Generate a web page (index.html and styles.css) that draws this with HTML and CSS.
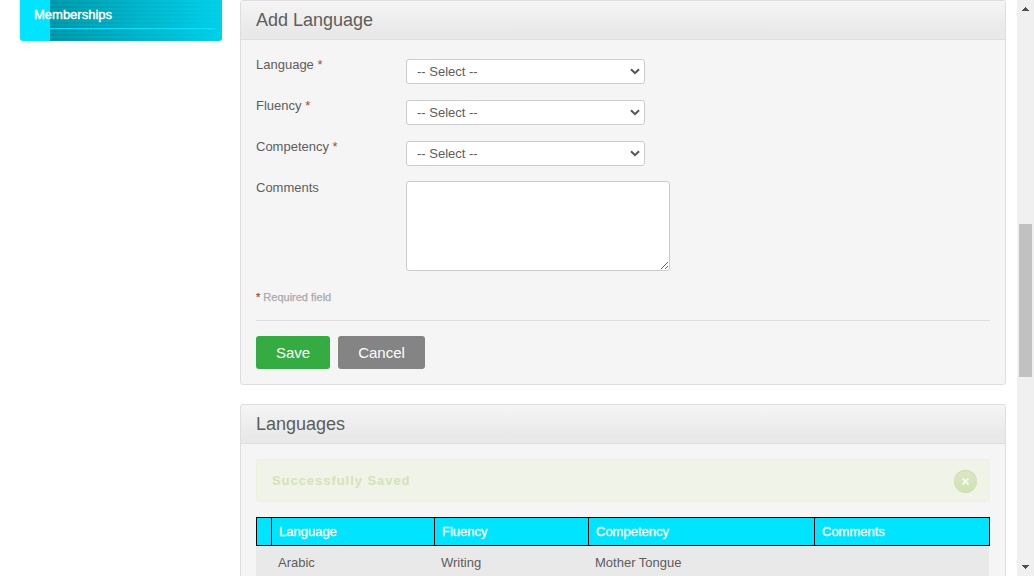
FILE: index.html
```html
<!DOCTYPE html>
<html lang="en">
<head>
<meta charset="utf-8">
<title>Languages</title>
<link rel="stylesheet" href="styles.css">
</head>
<body>
<div class="page">
  <nav class="sidebar">
    <a class="menu-item">Memberships</a>
  </nav>
  <main class="content">
    <section class="box">
      <h1 class="head">Add Language</h1>
      <form class="inner">
        <div class="row"><label>Language <em>*</em></label><div class="select"><span>-- Select --</span><svg width="10" height="7" viewBox="0 0 10 7"><path d="M1 1.2 5 5.2 9 1.2"/></svg></div></div>
        <div class="row"><label>Fluency <em>*</em></label><div class="select"><span>-- Select --</span><svg width="10" height="7" viewBox="0 0 10 7"><path d="M1 1.2 5 5.2 9 1.2"/></svg></div></div>
        <div class="row"><label>Competency <em>*</em></label><div class="select"><span>-- Select --</span><svg width="10" height="7" viewBox="0 0 10 7"><path d="M1 1.2 5 5.2 9 1.2"/></svg></div></div>
        <div class="row comments"><label>Comments</label><textarea></textarea></div>
        <p class="required"><em>*</em> Required field</p>
        <div class="actions"><button type="button" class="save">Save</button><button type="button" class="cancel">Cancel</button></div>
      </form>
    </section>
    <section class="box list">
      <h1 class="head">Languages</h1>
      <div class="inner">
        <div class="message"><span>Successfully Saved</span><a class="close"><svg width="9" height="9" viewBox="0 0 9 9"><path d="M1.5 1.5 7.5 7.5M7.5 1.5 1.5 7.5"/></svg></a></div>
        <div class="table">
          <div class="thead"><div></div><div>Language</div><div>Fluency</div><div>Competency</div><div>Comments</div></div>
          <div class="tbody"><div></div><div>Arabic</div><div>Writing</div><div>Mother Tongue</div><div></div></div>
        </div>
      </div>
    </section>
  </main>
  <div class="scrollbar">
    <svg width="7" height="4" viewBox="0 0 7 4" shape-rendering="crispEdges"><path d="M3 0h1v1h1v1h1v1h1v1H0V3h1V2h1V1h1z"/></svg>
    <div class="thumb"></div>
    <svg class="down" width="7" height="4" viewBox="0 0 7 4" shape-rendering="crispEdges"><path d="M0 0h7v1H6v1H5v1H4v1H3V3H2V2H1V1H0z"/></svg>
  </div>
</div>
</body>
</html>
```
FILE: styles.css
```css
* { box-sizing: border-box; }
html, body { height: 100%; overflow: hidden; }
body {
  margin: 0;
  background: #fff;
  color: #5d5d5d;
  font: 13px/15px "Liberation Sans", Arial, sans-serif;
}
.page { display: flex; height: 576px; overflow: hidden; }
.sidebar { width: 202px; margin: 0 18px 0 20px; }
.menu-item {
  display: block;
  height: 41px;
  padding: 7px 0 0 14px;
  border-radius: 0 0 3px 3px;
  color: #fff;
  -webkit-text-stroke: .4px #fff;
  background:
    linear-gradient(#00e4ff, #00e4ff) 0 0 / 30px 100% no-repeat,
    linear-gradient(#00e4ff, #00e4ff) 30px 28px / 165px 1px no-repeat,
    repeating-linear-gradient(rgba(0, 228, 255, .12) 0 2px, transparent 2px 4px),
    linear-gradient(90deg, #0092a4 30px, #00cfe8 100%);
}
.content { width: 766px; flex: none; }
.box { border: 1px solid #dedede; border-radius: 3px; background: #f5f5f5; height: 385px; }
.list { margin-top: 19px; height: 300px; }
.head {
  margin: 0;
  height: 39px;
  padding: 0 15px;
  border-bottom: 1px solid #dedede;
  border-radius: 3px 3px 0 0;
  background: linear-gradient(#f5f5f5, #e9e9e9 80%);
  font-size: 18px;
  font-weight: normal;
  line-height: 38px;
}
.inner { padding: 15px; }
em { color: #aa4935; font-style: normal; }
.row { display: flex; height: 41px; padding-top: 3px; }
.row label { width: 150px; margin-top: -1px; }
.select {
  display: flex;
  align-items: center;
  justify-content: space-between;
  width: 239px;
  height: 25px;
  margin-top: 1px;
  padding: 0 4px 0 10px;
  border: 1px solid #ccc;
  border-radius: 3px;
  background: #fff;
}
.select svg path { fill: none; stroke: #555; stroke-width: 2; }
.comments { height: 93px; padding-top: 0; }
.comments label { margin-top: 2px; }
.comments textarea {
  width: 264px;
  height: 90px;
  margin: 3px 0 0;
  border: 1px solid #ccc;
  border-radius: 3px;
  background: #fff;
  resize: both;
}
.required { margin: 19px 0 16px; color: #aaa; font-size: 11px; line-height: 14px; -webkit-text-stroke: .25px; }
.actions { display: flex; gap: 8px; padding-top: 15px; border-top: 1px solid #dedede; }
button {
  height: 33px;
  padding: 0;
  border: 0;
  border-radius: 3px;
  color: #fff;
  font: 15px "Liberation Sans", Arial, sans-serif;
}
.save { width: 74px; background: #35ac41; }
.cancel { width: 87px; background: #848484; }
.message {
  display: flex;
  align-items: center;
  justify-content: space-between;
  height: 43px;
  padding: 0 12px 0 15px;
  border: 1px solid #edf2de;
  border-radius: 3px;
  background: #eff3e8;
  color: #d4e3b7;
  font-weight: bold;
  letter-spacing: .95px;
}
.close {
  display: flex;
  align-items: center;
  justify-content: center;
  width: 23px;
  height: 23px;
  margin-top: 1px;
  border-radius: 50%;
  background: linear-gradient(#dbe8c6, #cfe1b0);
  box-shadow: inset 0 1px 1px #cbdcb2;
}
.close path { stroke: #f7faf1; stroke-width: 1.8; }
.table { margin-top: 15px; }
.thead, .tbody { display: grid; grid-template-columns: 15px 163px 154px 226px 175px; }
.thead { height: 29px; border: 1px solid #000; grid-template-columns: 14px 163px 154px 226px 175px; background: #00e4ff; color: #fff; -webkit-text-stroke: .3px #fff; }
.thead div { padding: 6px 7px; }
.thead div + div { border-left: 1px solid #000; }
.tbody { height: 40px; margin-right: 1px; background: #e9e9e9; }
.tbody div { padding: 9px 7px; }
.scrollbar { display: flex; flex-direction: column; align-items: center; width: 17px; height: 576px; margin-left: 11px; padding: 7px 0; background: #f0f0f0; }
.scrollbar path { fill: #505050; }
.thumb { width: 13px; height: 153px; margin-top: 213px; background: #c1c1c1; }
.down { margin-top: auto; }
```
